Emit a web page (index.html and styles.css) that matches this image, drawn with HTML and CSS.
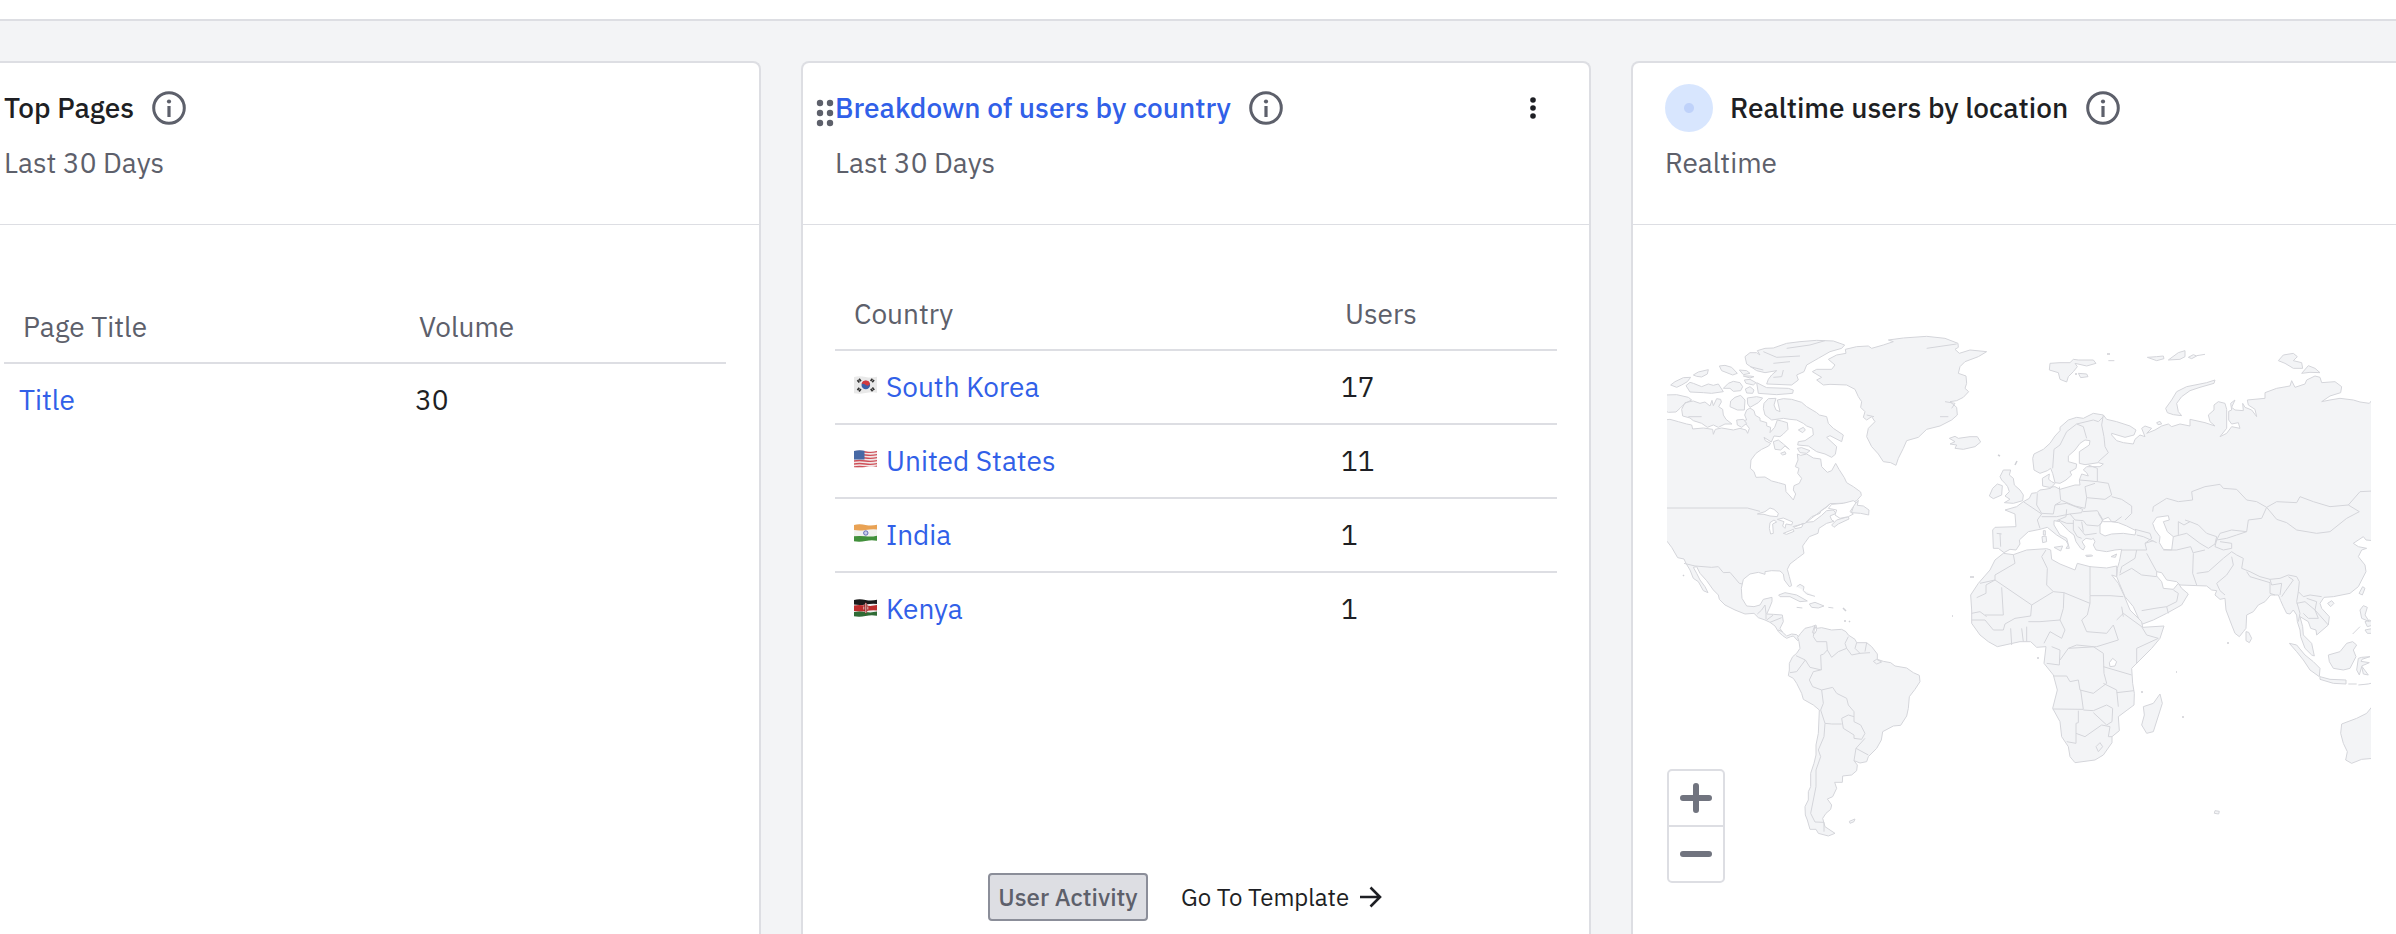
FILE: index.html
```html
<!DOCTYPE html>
<html lang="en">
<head>
<meta charset="utf-8">
<title>Dashboard</title>
<link rel="stylesheet" href="styles.css">
</head>
<body>
<svg class="defs" aria-hidden="true">
  <symbol id="info" viewBox="0 0 34 34"><circle cx="17" cy="17" r="15.3" fill="none" stroke="currentColor" stroke-width="3"/><circle cx="17" cy="10.5" r="2.1" fill="currentColor"/><path d="M17 15v11" stroke="currentColor" stroke-width="3.2"/></symbol>
  <clipPath id="wave"><path d="M.5 1Q6 -.3 12 1T23.500 .8V16.800Q18 15.800 12 17T.5 17.200Z"/></clipPath>
</svg>
<div class="topbar"></div>
<main class="board">
  <section class="card first">
    <header class="card-head">
      <div class="title-row"><h2 class="title">Top Pages</h2><svg class="info"><use href="#info"/></svg></div>
      <p class="subtitle">Last 30 Days</p>
    </header>
    <div class="card-body body-pages">
      <table class="table pages">
        <thead><tr><th>Page Title</th><th>Volume</th></tr></thead>
        <tbody><tr><td><a class="link">Title</a></td><td>30</td></tr></tbody>
      </table>
    </div>
  </section>

  <section class="card">
    <header class="card-head">
      <svg class="drag" viewBox="0 0 18 28" fill="#5d606b"><circle cx="4" cy="4" r="3.2"/><circle cx="14" cy="4" r="3.2"/><circle cx="4" cy="14" r="3.2"/><circle cx="14" cy="14" r="3.2"/><circle cx="4" cy="24" r="3.2"/><circle cx="14" cy="24" r="3.2"/></svg>
      <div class="title-row"><h2 class="title link">Breakdown of users by country</h2><svg class="info"><use href="#info"/></svg>
        <svg class="more" viewBox="0 0 6 22" fill="#1e1f24"><circle cx="3" cy="3" r="2.8"/><circle cx="3" cy="11" r="2.8"/><circle cx="3" cy="19" r="2.8"/></svg></div>
      <p class="subtitle">Last 30 Days</p>
    </header>
    <div class="card-body body-country">
      <table class="table country">
        <thead><tr><th>Country</th><th>Users</th></tr></thead>
        <tbody>
          <tr><td><span class="cell"><svg class="flag" viewBox="0 0 24 18"><g clip-path="url(#wave)"><path fill="#e9e9e9" d="M0 0h24v18H0z"/><circle cx="12.300" cy="9" r="4.300" fill="#3b5fa8"/><path d="M8.100 8a4.300 4.300 0 0 1 8.400 0q-2 3-4.200 1t-4.200-1" fill="#d23a40"/><path d="M4.200 5.800l3-2.400M17.300 3.400l3 2.200M4.200 12.400l3 2.400M17.500 14.600l3-2.400" stroke="#333" stroke-width="3" stroke-dasharray="1.700 .4"/></g></svg><a class="link">South Korea</a></span></td><td>17</td></tr>
          <tr><td><span class="cell"><svg class="flag" viewBox="0 0 24 18"><g clip-path="url(#wave)"><path fill="#f1e6e6" d="M0 0h24v18H0z"/><path d="M0 2Q6 1 12 2T24 1.500M0 5Q6 4 12 5T24 4.500M0 8Q6 7 12 8T24 7.500M0 11Q6 10 12 11T24 10.500M0 14Q6 13 12 14T24 13.500M0 17Q6 16 12 17T24 16" stroke="#cf5059" stroke-width="1.400" fill="none"/><path d="M0 0h11v9.500H0z" fill="#4769a5"/></g></svg><a class="link">United States</a></span></td><td>11</td></tr>
          <tr><td><span class="cell"><svg class="flag" viewBox="0 0 24 18"><g clip-path="url(#wave)"><path fill="#f1f1ef" d="M0 0h24v18H0z"/><path d="M0 0H24V5.500Q18 5 12 6T0 6Z" fill="#e9a254"/><path d="M0 12.300Q6 11.500 12 12.300T24 11.500V18H0Z" fill="#41903b"/><circle cx="12.300" cy="9" r="2.200" fill="#c9cdea" stroke="#5560b0" stroke-width=".9"/></g></svg><a class="link">India</a></span></td><td>1</td></tr>
          <tr><td><span class="cell"><svg class="flag" viewBox="0 0 24 18"><g clip-path="url(#wave)"><path fill="#eee" d="M0 0h24v18H0z"/><path d="M0 0H24V5Q18 4.500 12 5.500T0 5.500Z" fill="#1b1b1b"/><path d="M0 6.500Q6 5.500 12 6.500T24 6V11.500Q18 11 12 12T0 12Z" fill="#bd2c2c"/><path d="M0 13Q6 12 12 13T24 12.500V18H0Z" fill="#2f6b35"/><path d="M12.300 3q-4 6 0 12q4-6 0-12" fill="#9c2020"/><path d="M12.300 4v10M10.300 7.500v3M14.300 7.500v3" stroke="#eee" stroke-width=".8"/></g></svg><a class="link">Kenya</a></span></td><td>1</td></tr>
        </tbody>
      </table>
      <div class="actions">
        <span class="tag">User Activity</span>
        <a class="goto"><span>Go To Template</span><svg class="arrow" viewBox="0 0 22 22"><path d="M0 11H20M10.500 1.500L20 11L10.500 20.500" fill="none" stroke="#1e1f24" stroke-width="2.600"/></svg></a>
      </div>
    </div>
  </section>

  <section class="card">
    <header class="card-head">
      <div class="title-row"><span class="pulse"></span><h2 class="title">Realtime users by location</h2><svg class="info"><use href="#info"/></svg></div>
      <p class="subtitle">Realtime</p>
    </header>
    <div class="card-body body-map">
      <svg class="map" viewBox="1667 320 704 564">
        <g class="land" transform="translate(1650 320) scale(.333333)">
          <!-- North and Central America -->
          <path d="M40 300L60 298 85 305 110 312 125 315 128 327 160 324 188 328 190 343 196 328 215 324 250 330 270 325 288 330 293 340 298 325 288 312 270 315 268 303 290 300 284 285 290 270 300 264 312 272 316 286 330 294 330 302 350 308 350 318 362 322 360 338 374 322 382 300 395 303 412 308 414 328 400 342 390 350 372 348 364 366 342 352 346 362 362 370 356 378 335 388 318 400 303 420 301 445 312 455 318 472 345 471 365 483 385 488 406 494 408 515 420 528 430 540 437 522 430 510 432 497 448 490 455 475 443 460 447 445 436 440 444 420 442 402 452 406 470 402 490 414 512 417 515 440 532 457 545 452 557 430 567 448 583 473 590 488 610 500 632 516 634 526 620 542 600 549 540 551 530 562 513 572 510 580 485 590 468 607 490 605 515 586 530 572 550 570 558 580 540 588 545 600 552 604 530 610 507 625 504 640 478 650 465 668 458 678 462 700 442 715 420 732 412 748 418 770 425 797 418 800 403 780 400 762 390 753 365 752 345 755 345 763 325 757 300 762 280 778 274 805 276 835 290 858 312 860 330 855 340 838 366 832 366 845 358 865 350 882 370 883 397 885 400 905 390 925 396 935 410 948 425 942 440 944 450 955 443 962 430 948 422 950 410 955 398 947 385 935 375 918 360 907 345 900 325 893 312 880 285 882 255 870 225 855 208 838 205 825 190 810 170 782 150 760 140 740 130 742 140 760 150 780 165 800 174 818 160 812 145 785 130 775 120 750 108 730 102 717 83 713 65 682 52 665 40 650Z"/>
          <!-- Arctic islands -->
          <path d="M40 225L80 224 115 232 125 240 105 250 90 265 78 276 55 277 40 270ZM105 248L130 243 150 250 165 246 180 258 186 241 190 257 200 236 212 238 214 246 206 260 218 268 220 285 228 298 246 312 225 312 205 322 190 315 172 322 155 310 130 302 120 294 98 288 95 268ZM62 195L75 185 100 173 122 172 112 185 95 195 80 202ZM108 197L120 187 130 190 155 200 175 192 190 196 205 192 220 215 185 220 160 218 120 216ZM130 165L145 156 175 149 172 162 155 171 140 169ZM208 138L225 136 245 142 262 160 248 165 215 152ZM268 150L290 152 300 160 280 164ZM280 168L300 168 312 170 300 174ZM220 205L235 190 250 184 270 188 278 200 272 212 250 214 240 205ZM283 180L300 178 318 188 310 195 288 190ZM286 207L300 200 312 210 308 220 290 219ZM242 243L255 232 272 226 285 240 283 270 262 270 240 260ZM292 234L320 230 338 234 325 248 300 262 293 252ZM340 265L342 250 355 236 378 235 372 255 378 270 390 275 382 240 400 236 425 238 455 247 470 260 500 278 508 285 530 290 535 310 550 325 580 345 575 365 540 347 530 352 560 380 556 403 545 412 525 402 500 395 475 378 443 375 445 365 465 362 490 345 488 325 470 318 460 310 440 300 420 298 400 295 365 300 345 285ZM322 92L345 85 370 84 410 70 450 65 500 61 550 63 584 75 575 85 540 95 505 115 470 135 462 155 440 165 445 180 425 195 350 192 355 178 365 165 380 152 345 158 320 152 290 132 285 110 300 98 320 98 330 105ZM320 188L350 203 415 205 430 210 428 220 380 224 325 220ZM260 300L280 298 290 310 275 322 262 315ZM370 365L375 388 392 390 405 378 418 388 400 372 385 360ZM392 400L405 395 408 402 398 405ZM445 330L460 322 466 330 458 338ZM442 385L455 383 480 392 470 400 450 398Z"/>
          <!-- Greenland, Iceland -->
          <path d="M487 155L500 148 545 148 555 135 535 118 560 105 588 100 586 88 620 80 655 78 665 85 700 75 730 65 715 60 760 54 830 49 885 55 924 70 925 82 915 88 928 100 960 90 1010 95 985 110 945 125 930 140 925 160 948 168 950 190 945 205 956 215 940 232 920 242 900 245 920 262 922 285 905 300 870 318 830 328 805 352 770 362 760 385 745 415 738 436 722 428 700 425 685 402 665 380 650 350 655 325 675 305 665 290 650 300 640 292 645 275 632 262 635 245 625 230 615 208 590 195 540 193 520 195 500 180 515 172ZM898 355L915 349 925 355 960 350 982 350 992 366 975 380 940 388 915 385 920 375 900 372 915 365Z"/>
          <path d="M604 578L612 555 625 541 622 556 640 558 657 570 656 585 632 580ZM545 615L560 600 595 590 597 597 565 612 552 622ZM386 825L405 818 440 825 472 843 450 845 420 830 390 830ZM440 800L450 793 462 800 460 812 470 822 495 829M478 852L495 847 522 858 505 864 485 862ZM440 862L457 864M535 862L550 864"/>
          <!-- South America -->
          <path d="M443 952L452 940 465 925 485 920 498 915 500 925 515 923 545 930 575 928 588 935 595 945 615 958 620 968 650 968 665 980 682 1002 682 1018 700 1024 722 1028 735 1038 770 1044 790 1058 808 1066 810 1085 795 1108 778 1130 775 1165 770 1188 752 1216 730 1218 698 1235 694 1260 680 1285 655 1310 650 1325 630 1329 612 1322 622 1335 620 1352 605 1365 578 1368 577 1387 554 1387 560 1405 548 1430 532 1437 545 1455 542 1468 528 1480 518 1495 525 1520 555 1540 535 1548 505 1540 498 1528 480 1528 472 1500 466 1485 465 1460 475 1440 475 1415 482 1400 482 1360 492 1330 498 1305 498 1275 505 1240 508 1170 490 1155 460 1138 455 1120 440 1090 430 1075 415 1067 418 1050 418 1030 428 1010 440 1000 450 985 447 965ZM598 1504L615 1497 612 1505 600 1510Z"/>
          <path class="water" d="M322 582L345 575 360 564 372 568 385 580 382 590 360 588 342 583ZM360 608L372 600 380 606 368 612 370 640 362 642 358 625ZM382 598L400 594 428 606 425 615 408 612 405 625 398 618 402 605ZM400 640L430 628 432 634 410 643ZM432 622L460 610 455 622 435 626ZM545 553L580 550 610 542 618 548 600 575 610 582 595 590 570 595 555 585 560 570 535 565ZM487 938L494 918 500 930 495 940Z"/>
          <path class="border" d="M51 564H292L330 574M428 620L465 610 500 583 540 552M340 150L300 140M102 730L135 738 185 742 205 740 220 758 240 757 268 790 276 792M322 882L335 870 345 855 348 880 348 898M350 900L370 885M360 907L395 893M384 930L398 935M494 920L490 950 500 965 530 965 532 990 520 1003 512 1005 514 1050 480 1042 466 1020 438 1007M466 1020L440 1055 420 1058M512 1050L490 1055 478 1080 488 1100 515 1110 548 1102 560 1120 590 1135 595 1155 612 1175 612 1205 632 1215 645 1240 635 1258 612 1255 612 1245 580 1225 575 1195 595 1185 612 1190M515 1110L520 1150 512 1170 525 1210 545 1212 575 1212M525 1210L522 1250 505 1290 512 1310 498 1350 498 1400 490 1440 482 1480 495 1506 522 1507 522 1535M645 1255L618 1285 612 1322M618 1285L655 1305M532 990L545 1012 565 995 590 985 585 970 595 950M590 985L605 1005 630 1000 660 998M620 968L615 985 630 1000M650 968L645 995M670 1024L680 1018 695 1026 680 1032Z"/>
          <path class="border" d="M340 95L380 112 450 108M370 130L420 125M400 150L395 170 370 172M525 62L480 75 410 85M830 85L920 72M650 285L672 290M870 290L895 290M885 245L915 250 905 265M115 290L155 290"/>
        </g>
        <g class="land" transform="translate(1960 320) scale(.333333)">
          <!-- British Isles, Nordic and Arctic islands -->
          <path d="M120 470L130 450 152 450 148 465 160 475 163 495 180 510 190 525 188 542 160 550 133 548 150 538 135 528 148 515 143 500 135 490 125 480ZM98 505L112 492 127 497 125 525 100 536 88 528ZM268 150L270 130 300 128 330 128 340 118 355 120 400 120 408 130 380 138 345 130 352 140 340 155 325 170 320 186 300 178 295 158ZM355 160L380 162 384 170 362 173ZM562 112L590 110 610 108 612 116 590 122ZM625 120L655 98 675 92 675 110 660 118ZM685 112L700 104 710 108 695 116ZM710 107L735 103M445 122H463M617 265L635 240 650 215 680 200 740 188 765 180 762 190 720 202 690 212 665 230 650 250 655 275 665 287 640 284 622 278ZM955 122L970 105 1000 100 1012 110 1000 122 1025 128 1028 145 1000 145 975 130ZM1025 160L1045 137 1065 145 1080 158 1050 157ZM590 308L600 304 605 312 594 314ZM377 706L395 705 398 708 380 710ZM453 710L470 702 466 712ZM282 682L308 678 302 693ZM246 650L258 648 260 665 248 668ZM250 632L256 632 256 645 250 645Z"/>
          <!-- Eurasia -->
          <path d="M1240 235L1228 250 1200 246 1180 240 1140 235 1110 240 1085 245 1110 228 1142 218 1145 200 1125 185 1085 188 1080 172 1065 168 1040 180 1035 192 1005 202 995 182 990 198 950 205 915 218 915 235 862 240 865 255 885 268 890 290 875 270 855 262 848 250 850 272 825 270 815 262 825 240 812 250 815 270 806 274 806 300 815 312 835 308 840 325 815 320 800 340 780 350 800 325 800 268 795 250 775 245 762 255 762 270 745 285 750 305 765 318 735 308 690 298 690 318 660 312 635 320 625 312 605 318 585 330 560 340 575 325 555 318 545 325 555 350 540 345 525 358 520 372 490 368 470 362 455 345 455 340 495 352 522 345 528 330 510 318 470 305 440 298 430 285 400 280 370 295 350 292 325 300 300 322 300 332 285 348 270 370 250 388 222 402 218 415 222 450 240 460 262 452 272 445 278 460 285 488 300 490 318 480 335 465 330 455 348 445 350 432 325 425 325 408 345 390 360 370 375 360 390 362 388 375 358 395 358 430 375 434 415 428 430 432 420 440 380 440 370 450 380 458 385 468 365 462 358 480 360 495 345 495 300 508 285 500 268 502 248 498 247 475 268 462 266 478 275 485 285 490 272 505 255 508 240 510 230 518 215 520 208 535 190 545 170 560 135 570 165 582 168 620 105 622 98 630 100 685 115 685 132 698 150 688 168 690 180 672 178 660 205 635 240 628 262 622 290 645 318 662 325 675 318 685 328 685 320 655 300 645 282 615 282 602 300 605 325 632 342 645 348 665 362 685 370 690 375 680 366 665 378 655 395 658 400 655 405 665 400 675 408 690 440 695 465 690 485 688 482 705 478 725 472 745 470 770 478 790 495 830 520 860 540 905 540 915 580 900 620 880 665 855 685 822 665 805 655 790 640 808 610 805 605 785 590 768 590 755 605 758 620 780 650 785 660 795 740 798 755 810 770 812 765 825 780 838 795 835 798 870 815 915 825 940 838 950 850 935 858 925 860 885 880 875 895 855 915 845 932 825 955 825 962 842 970 860 980 880 990 882 1000 870 1010 885 1012 905 1020 930 1022 950 1035 985 1055 1005 1063 1008 1055 970 1030 945 1028 920 1020 890 1045 905 1052 925 1068 930 1070 945 1105 915 1108 890 1085 865 1080 850 1092 832 1120 830 1170 820 1195 800 1218 755 1215 735 1195 710 1205 690 1220 685 1195 680 1180 670 1210 650 1218 660 1240 662Z"/>
          <!-- Africa -->
          <path d="M105 720L130 700 160 704 200 690 260 686 272 690 275 718 300 732 345 750 352 730 390 740 440 744 470 738 470 770 455 765 475 790 492 826 510 870 545 905 548 922 612 918 600 955 575 985 540 1020 515 1045 518 1090 523 1120 522 1155 475 1190 478 1232 456 1250 456 1268 430 1305 405 1320 345 1328 330 1310 325 1280 305 1250 300 1205 278 1165 292 1110 280 1065 252 1030 258 980 230 982 212 965 180 965 112 980 85 965 60 945 35 910 35 870 32 825 55 790 90 750ZM600 1122L607 1150 580 1235 560 1240 545 1215 553 1185 550 1160 580 1150Z"/>
          <!-- South and East Asian islands, Australia -->
          <path d="M858 935L866 937 875 955 868 968 858 962ZM988 970L1010 975 1035 1005 1060 1025 1080 1045 1078 1070 1050 1050 1030 1020 1010 995ZM1080 1070L1110 1078 1158 1080 1158 1092 1120 1090 1080 1078ZM1165 1092H1190M1195 1095L1225 1092 1240 1088M1105 1005L1140 995 1160 970 1178 965 1190 975 1180 990 1188 1010 1170 1045 1150 1050 1120 1045 1108 1025ZM1195 1015L1205 1012 1230 1010 1206 1018 1203 1024 1228 1028 1205 1038 1225 1065 1210 1062 1205 1040 1198 1065 1190 1050ZM1200 870L1210 857 1222 862 1215 885 1228 905 1205 895ZM1215 905L1230 900 1240 915 1222 920ZM1215 930L1240 925 1240 940 1222 940ZM1178 942L1200 920M1103 850L1115 842 1122 850 1112 860ZM1197 820L1208 800 1215 805 1207 825ZM1240 1155L1220 1180 1190 1195 1145 1212 1142 1240 1150 1270 1162 1295 1157 1320 1175 1330 1205 1318 1240 1315ZM763 1480L765 1472 778 1474 776 1482Z"/>
          <path class="water" d="M420 640L420 615 430 598 445 592 455 605 475 608 500 618 528 632 525 645 490 640 455 642 435 648ZM578 610L590 592 625 587 628 600 610 605 622 635 640 650 635 690 610 688 598 668 600 650 585 630ZM448 1028L458 1015 470 1025 465 1038 450 1040Z"/>
          <path class="border" d="M278 445L282 388 300 375 320 335 350 312 370 320 380 355M430 285L425 315 432 350 435 380 445 398 415 425M350 312L400 300 415 305 430 290M385 435L412 445 412 485 360 480M412 485L445 490 455 525 435 538 380 533 375 500 405 490M380 533L375 565 345 558 302 540 298 500M232 520L230 555 245 580 280 582 285 555 302 545M190 545L245 582 232 600 240 625M285 555L320 550 368 568 365 578 330 582 290 590 245 590M320 568L318 590 290 602M330 582L345 600 370 602 380 615 415 618 425 608 428 598 412 572 368 575M455 530L485 538 515 558 515 580 495 600M485 590L465 605 430 605 415 580M340 600L340 630 352 650 365 655M355 620L375 645 410 640M365 605L370 635M295 600L320 610 340 610M120 640L122 680M110 640L125 642M525 628L570 640 575 655 555 670 560 690 530 690 485 690M530 645L550 650 590 668M555 670L580 662M610 690L650 690 692 680 700 700 698 760 710 795M640 650L680 640 720 670 745 685 765 672 770 650 740 640 715 615 690 605 672 615 655 605 655 645M690 605L675 600M578 575L580 560 620 535 655 545 698 540 695 515 735 500 780 493 790 505 830 508 860 540 890 545 920 562 905 595 865 600 860 635 815 630 780 640 770 660 800 655 830 645 860 635M770 660L765 680 790 690 815 685 815 670 780 665M735 690L700 698M710 760L745 755 790 715 815 695 830 705 850 715 845 745 870 755 900 770 930 778 960 775 985 765 1010 770 1018 785 1015 815 1030 830 1050 825 1085 830M815 710L820 735 800 765 770 790 780 812 795 825M860 755L870 770 930 788 930 820 945 825M930 778L935 795 965 790 960 825M985 770L1000 780 975 815 965 830M1015 815L1010 845 1020 880 1015 905M1040 835L1070 845 1065 870 1105 915M1010 850L1035 845 1065 870 1075 895 1045 895 1030 880M920 562L950 545 1010 548 1020 530 1060 545 1110 560 1165 555 1200 515 1240 513M1165 555L1198 575 1160 595 1110 635 1070 640 1010 630 980 608 950 598 920 562M490 830L450 827H390V738M390 828V850L312 818 280 815 215 855 105 780 60 790M258 690L245 710 262 745 260 795 280 815M160 704L165 730 105 765V780L78 795V820L50 833M125 802L130 885H75M215 855L212 888 165 895 135 912 130 930 100 930 75 900 35 900M35 880L60 875 80 890M152 925L155 975M185 925L190 965M200 920V965M205 905L240 905 300 900 310 865 312 818M300 900L315 930 305 955 270 935 252 970M390 850L382 885 365 900 380 935 440 940 460 915 475 960 410 980 325 985 300 1020M470 900L490 880 545 920 560 945 595 955 530 985V1030M485 860L490 890M275 980L300 990 298 1035 260 1030M325 985L350 975 400 980 430 1000 432 1060 440 1090 400 1120 360 1110 355 1080 330 1085 320 1068 280 1068M430 1040L515 1065M430 1090L470 1110 475 1160M470 1118L522 1112M362 1110L370 1168 278 1167M370 1170L400 1172 440 1155 458 1165 456 1205 440 1215 400 1178M355 1172V1208L348 1210V1270L320 1265M348 1240L375 1250 425 1215 450 1220 445 1250 456 1250M408 1280L420 1268 428 1280 415 1295ZM478 765L515 745 545 765 590 770M530 690L525 715 485 740M560 700L590 755M485 740L480 760M625 880L620 860 585 865 545 872M620 860L650 845 655 820 640 810"/>
        </g>
        <path class="specks" d="M1998 455l2 1M2015 465l2-4M1970 577l4 0M1952 616l1 0M2037 658l2 0M2227 643l2 0M2176 672l1 0M2182 717l2 0M2141 692l2 0M2107 354l3 0M2075 374l2 0M1843 608l3 3M1845 620l0 2M1850 621l-1 1M1683 575l1 1"/>
      </svg>
      <div class="zoom">
        <button class="zoom-btn" aria-label="Zoom in"><svg viewBox="0 0 32 32"><path d="M3 16H29M16 4V28" stroke="#71747f" stroke-width="6" stroke-linecap="round"/></svg></button>
        <button class="zoom-btn" aria-label="Zoom out"><svg viewBox="0 0 32 32"><path d="M3 16H29" stroke="#71747f" stroke-width="6" stroke-linecap="round"/></svg></button>
      </div>
    </div>
  </section>
</main>
</body>
</html>
```
FILE: styles.css
```css
* { box-sizing: border-box; }
html { height: 934px; overflow: hidden; }
body {
  margin: 0;
  width: 2396px;
  height: 934px;
  overflow: hidden;
  background: #f3f4f6;
  color: #1e1f24;
  font-family: "IBM Plex Sans", Roboto, sans-serif;
  font-size: 28px;
  line-height: 40px;
}
.defs { position: absolute; width: 0; height: 0; }
.topbar { height: 21px; background: #fff; border-bottom: 2px solid #dddee3; }
.board { display: flex; gap: 40px; margin: 40px 0 0 -30px; height: 873px; overflow: hidden; }
.card {
  flex: 0 0 790px;
  background: #fff;
  border: 2px solid #dddee3;
  border-bottom: 0;
  border-radius: 8px 8px 0 0;
}
.first { flex-basis: 791px; }
.card-head {
  position: relative;
  height: 162px;
  padding: 21px 32px 0;
  border-bottom: 1px solid #dddee3;
}
.title-row { display: flex; align-items: center; height: 48px; }
.title { margin: 0; font-size: 28px; font-weight: 500; white-space: nowrap; }
.subtitle { margin: 11px 0 0; color: #5d606b; }
.link { color: #3160e8; }
.info { width: 34px; height: 34px; margin-left: 18px; color: #5d606b; }
.more { width: 6px; height: 22px; margin-left: auto; margin-right: 21px; }
.drag { position: absolute; left: 13px; top: 36px; width: 18px; height: 28px; }
.pulse {
  width: 48px;
  height: 48px;
  margin-right: 17px;
  border-radius: 50%;
  background: radial-gradient(circle, #bfd2fa 4.5px, #d8e6fe 5.5px);
}
.card-body { padding: 0 32px; }
.body-pages { padding-top: 65px; }
.body-country { padding-top: 52px; }
.table { width: 722px; border-collapse: collapse; table-layout: fixed; }
.table th, .table td { height: 74px; padding: 0; text-align: left; font-weight: 400; }
.table th { color: #5d606b; padding: 2px 0 0 19px; height: 73px; }
.table td { padding: 0 0 1px 15px; }
.table tbody tr { border-top: 2px solid #dddee3; }
.pages th:first-child { width: 396px; }
.country th:first-child { width: 491px; }
.cell { display: flex; align-items: center; gap: 8px; }
.flag { width: 25px; height: 18px; margin: -3px 0 0 3px; }
.actions { display: flex; align-items: center; margin: 227px 0 0 153px; font-size: 24px; }
.tag {
  width: 160px;
  height: 48px;
  line-height: 44px;
  text-align: center;
  font-weight: 500;
  color: #5d606b;
  background: #dddee3;
  border: 2px solid #8b8e99;
  border-radius: 4px;
}
.goto { display: flex; align-items: center; gap: 11px; margin-left: 33px; }
.arrow { width: 22px; height: 22px; }
.body-map { position: relative; padding: 95px 34px 0; }
.map { display: block; width: 704px; height: 564px; }
.land path { fill: #f3f4f6; stroke: #d4d5da; stroke-width: 3; stroke-linejoin: round; }
.land .water { fill: #fff; }
.land .border { fill: none; }
.specks { stroke: #cfd0d5; stroke-width: 1.5; fill: none; }
.zoom {
  position: absolute;
  left: 34px;
  top: 544px;
  width: 58px;
  height: 114px;
  border: 2px solid #dddee3;
  border-radius: 5px;
  background: #fff;
}
.zoom-btn { display: flex; align-items: center; justify-content: center; width: 54px; height: 54px; padding: 0; border: 0; background: none; }
.zoom-btn + .zoom-btn { height: 56px; border-top: 2px solid #dddee3; }
.zoom-btn svg { width: 32px; height: 32px; }
```
